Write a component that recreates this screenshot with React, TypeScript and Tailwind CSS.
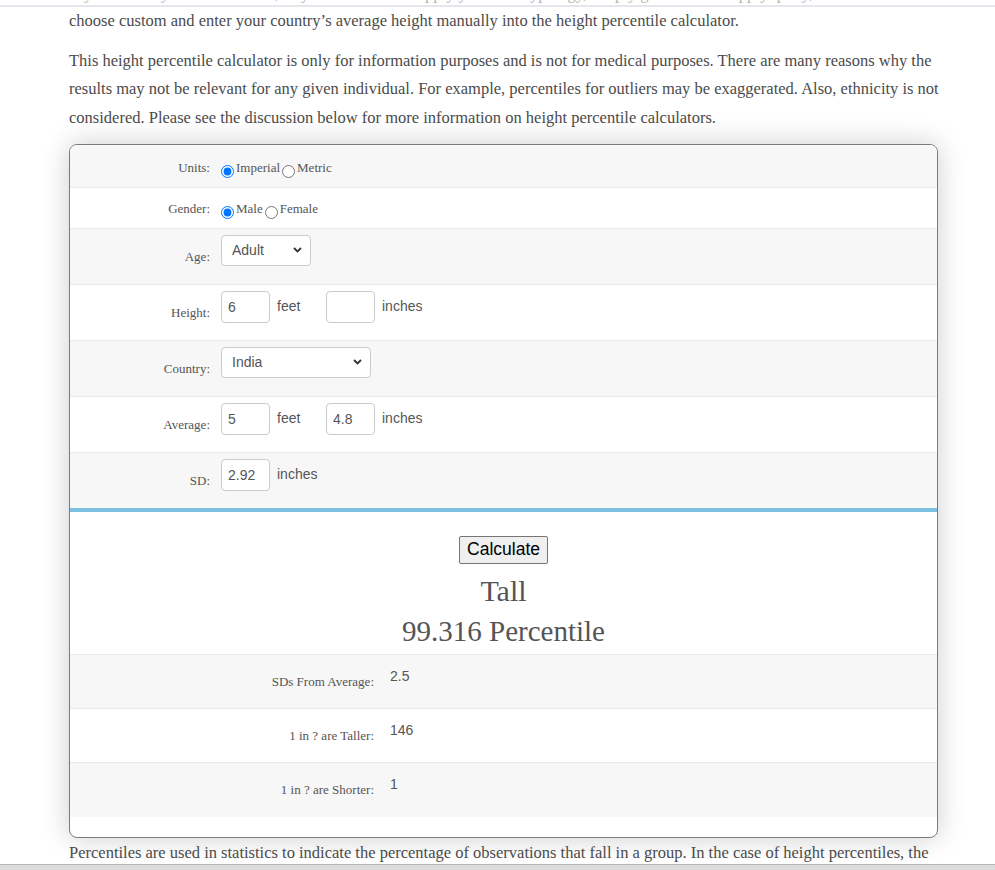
import React from "react";

const serif = "font-['Liberation_Serif','Times_New_Roman',serif]";
const sans = "font-['Liberation_Sans',Arial,sans-serif]";

function Chevron() {
  return (
    <svg className="pointer-events-none absolute right-[9px] top-[12px]" width="9" height="6" viewBox="0 0 9 6" aria-hidden="true">
      <path d="M1 1l3.5 3.5L8 1" fill="none" stroke="#333" strokeWidth="1.8" />
    </svg>
  );
}

function Select({ value, width }: { value: string; width: string }) {
  return (
    <div className={`relative ${width}`}>
      <select
        defaultValue={value}
        className={`${sans} h-[31px] w-full appearance-none rounded-[4px] border border-[#ccc] bg-white pl-[10px] text-[14px] text-[#555]`}
      >
        <option>{value}</option>
      </select>
      <Chevron />
    </div>
  );
}

function Box({ value }: { value: string }) {
  return (
    <input
      defaultValue={value}
      className={`${sans} h-[32px] w-[49px] rounded-[4px] border border-[#ccc] bg-white px-[6px] text-[14px] text-[#555]`}
    />
  );
}

function Unit({ children, wide }: { children: string; wide?: boolean }) {
  return <span className={`${sans} pl-[7px] text-[14px] text-[#555] ${wide ? "w-[56px]" : ""}`}>{children}</span>;
}

function Radio({ label, checked, name }: { label: string; checked?: boolean; name: string }) {
  return (
    <label className="flex items-start">
      <input type="radio" name={name} defaultChecked={checked} className="mr-[2px] mt-[5px] h-[13px] w-[13px]" />
      <span className="mr-[2px]">{label}</span>
    </label>
  );
}

function FormRow({
  label,
  children,
  gray,
}: {
  label: string;
  children: React.ReactNode;
  gray?: boolean;
}) {
  return (
    <div className={`flex h-[56px] border-t border-[#e9e9e9] ${gray ? "bg-[#f7f7f7]" : "bg-white"}`}>
      <div className="w-[140px] pt-[20px] text-right leading-[16px]">{label}</div>
      <div className="ml-[11px] flex items-center self-start pt-[6px]">{children}</div>
    </div>
  );
}

function ResultRow({ label, value, gray }: { label: string; value: string; gray?: boolean }) {
  return (
    <div className={`flex h-[54px] border-t border-[#e9e9e9] ${gray ? "bg-[#f7f7f7]" : "bg-white"}`}>
      <div className="w-[304px] pt-[19px] text-right leading-[16px]">{label}</div>
      <div className={`${sans} ml-[16px] pt-[13px] text-[14px] leading-[16px]`}>{value}</div>
    </div>
  );
}

export default function App() {
  return (
    <div className={`${serif} min-h-[870px] bg-white text-[#4b4b4b]`}>
      <div className="h-[7px] overflow-hidden border-b-2 border-[#e6e6ec]">
        <p className="ml-[69px] mt-[-17px] whitespace-nowrap text-[16.5px] leading-[21px] text-[#b5b5b5]">
          If your country is not in the list, or you would rather apply your own typology, simply go ahead and apply query, or
        </p>
      </div>

      <div className="ml-[69px] w-[869px]">
        <p className="w-[876px] text-[16.5px] leading-[28.5px]">
          choose custom and enter your country’s average height manually into the height percentile calculator.
        </p>
        <p className="mt-[11px] w-[876px] text-[16.5px] leading-[28.7px]">
          This height percentile calculator is only for information purposes and is not for medical purposes. There are many reasons why the results may not be relevant for any given individual. For example, percentiles for outliers may be exaggerated. Also, ethnicity is not considered. Please see the discussion below for more information on height percentile calculators.
        </p>

        <div className="mt-[11px] overflow-hidden rounded-[8px] border border-[#7a7a7a] bg-white text-[13px] text-[#555] shadow-[0_0_28px_rgba(0,0,0,0.2)]">
          <div className="flex h-[42px] bg-[#f7f7f7]">
            <div className="w-[140px] pt-[15px] text-right leading-[16px]">Units:</div>
            <div className="ml-[11px] flex self-start pt-[15px] leading-[16px]">
              <Radio name="units" label="Imperial" checked />
              <Radio name="units" label="Metric" />
            </div>
          </div>
          <div className="flex h-[41px] border-t border-[#e9e9e9] bg-white">
            <div className="w-[140px] pt-[13px] text-right leading-[16px]">Gender:</div>
            <div className="ml-[11px] flex self-start pt-[13px] leading-[16px]">
              <Radio name="gender" label="Male" checked />
              <Radio name="gender" label="Female" />
            </div>
          </div>
          <FormRow label="Age:" gray>
            <Select value="Adult" width="w-[90px]" />
          </FormRow>
          <FormRow label="Height:">
            <Box value="6" />
            <Unit wide>feet</Unit>
            <Box value="" />
            <Unit>inches</Unit>
          </FormRow>
          <FormRow label="Country:" gray>
            <Select value="India" width="w-[150px]" />
          </FormRow>
          <FormRow label="Average:">
            <Box value="5" />
            <Unit wide>feet</Unit>
            <Box value="4.8" />
            <Unit>inches</Unit>
          </FormRow>
          <FormRow label="SD:" gray>
            <Box value="2.92" />
            <Unit>inches</Unit>
          </FormRow>

          <div className="h-[4px] bg-[#7ec0df]" />

          <div className="flex flex-col items-center pt-[24px]">
            <button
              className={`${sans} h-[28px] rounded-[2px] border border-[#767676] bg-[#efefef] px-[7px] text-[17.5px] leading-none text-black`}
            >
              Calculate
            </button>
            <div className="mt-[7px] text-[30px] leading-[40px]">Tall</div>
            <div className="text-[29px] leading-[40px]">99.316 Percentile</div>
          </div>

          <div className="mt-[3px]">
            <ResultRow label="SDs From Average:" value="2.5" gray />
            <ResultRow label="1 in ? are Taller:" value="146" />
            <ResultRow label="1 in ? are Shorter:" value="1" gray />
          </div>
          <div className="h-[21px] border-t border-[#f7f7f7]" />
        </div>

        <p className="mt-[1px] whitespace-nowrap text-[16.5px] leading-[28.5px]">
          Percentiles are used in statistics to indicate the percentage of observations that fall in a group. In the case of height percentiles, the
        </p>
      </div>

      <div className="fixed inset-x-0 bottom-0 h-[6px] border-t border-[#b8b8b8] bg-[#dcdcdc]" />
    </div>
  );
}
